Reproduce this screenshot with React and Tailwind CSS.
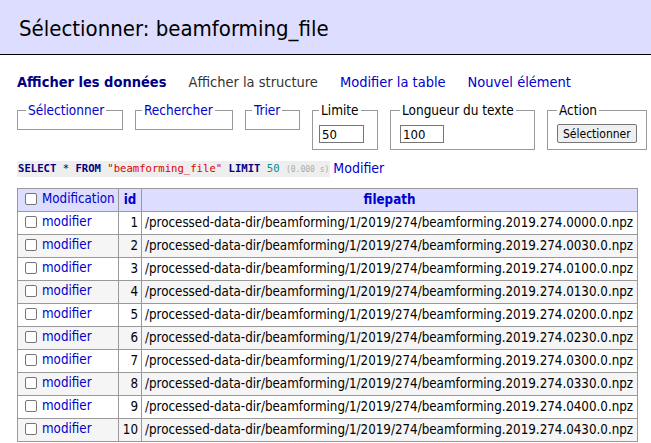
const rows = [
  "0000", "0030", "0100", "0130", "0200", "0230", "0300", "0330", "0400", "0430",
];

const font = { fontFamily: '"DejaVu Sans Condensed", "DejaVu Sans", sans-serif' };

export default function App() {
  return (
    <div className="min-h-screen bg-white text-[13px] text-black" style={font}>
      {/* header band */}
      <div className="h-[55px] bg-[#ddf] border-b border-black flex items-center pl-[19px] pt-[3px]">
        <h1 className="text-[22px] font-normal">Sélectionner: beamforming_file</h1>
      </div>

      <div className="pl-[17px]">
        {/* nav */}
        <div className="flex gap-[22px] mt-[19px] h-[17px] items-center text-[14.5px]">
          <span className="font-bold text-[#000080]">Afficher les données</span>
          <a className="text-[#333]">Afficher la structure</a>
          <a className="text-[#0000cc]">Modifier la table</a>
          <a className="text-[#0000cc]">Nouvel élément</a>
        </div>

        {/* fieldsets */}
        <div className="flex items-start gap-[12px] mt-[9px] text-[13.5px]">
          <fieldset className="border border-[#999] w-[106px] h-[30px] px-[8px]">
            <legend className="px-[2px] text-[#0000cc]">Sélectionner</legend>
          </fieldset>
          <fieldset className="border border-[#999] w-[98px] h-[30px] px-[6px]">
            <legend className="px-[2px] text-[#0000cc]">Rechercher</legend>
          </fieldset>
          <fieldset className="border border-[#999] w-[55px] h-[30px] px-[6px]">
            <legend className="px-[2px] text-[#0000cc]">Trier</legend>
          </fieldset>
          <fieldset className="border border-[#999] w-[66px] h-[50px] px-[6px]">
            <legend className="px-[2px]">Limite</legend>
            <input
              defaultValue="50"
              className="w-[45px] h-[18px] border border-[#767676] px-[2px] text-[13px] mt-[5px]"
            />
          </fieldset>
          <fieldset className="border border-[#999] w-[145px] h-[50px] px-[9px]">
            <legend className="px-[2px]">Longueur du texte</legend>
            <input
              defaultValue="100"
              className="w-[44px] h-[18px] border border-[#767676] px-[2px] text-[13px] mt-[5px]"
            />
          </fieldset>
          <fieldset className="border border-[#999] w-[98px] h-[50px] px-[9px]">
            <legend className="px-[2px]">Action</legend>
            <button className="h-[19px] px-[5px] mt-[4px] bg-[#efefef] border border-[#767676] rounded-[2px] text-[12px] leading-none">
              Sélectionner
            </button>
          </fieldset>
        </div>

        {/* query */}
        <p className="mt-[10px] flex items-center gap-[3px] h-[17px]">
          <code
            className="bg-[#eee] text-[10.6px] px-[1px] leading-[15px]"
            style={{ fontFamily: '"DejaVu Sans Mono", monospace' }}
          >
            <b className="text-[#000080]">SELECT</b> * <b className="text-[#000080]">FROM</b>{" "}
            <span className="text-[#d00]">"beamforming_file"</span>{" "}
            <b className="text-[#000080]">LIMIT</b> <span className="text-[#009090]">50</span>{" "}
            <span className="text-[#aaa] text-[8px] font-normal">(0.000 s)</span>
          </code>
          <a className="text-[#0000cc] text-[14px]">Modifier</a>
        </p>

        {/* result table */}
        <table className="mt-[11px] border-collapse border border-[#999] w-[621px] text-[13.25px]">
          <thead>
            <tr className="bg-[#ddf] h-[22px]">
              <th className="border border-[#999] w-[101px] text-left font-normal pl-[7px] pr-[3px]">
                <span className="inline-flex items-center gap-[5px] text-[#0000cc]">
                  <span className="w-[12px] h-[12px] border border-[#767676] rounded-[2px] bg-white" />
                  Modification
                </span>
              </th>
              <th className="border border-[#999] w-[23px] text-[#0000cc] font-bold">id</th>
              <th className="border border-[#999] text-[#0000cc] font-bold">filepath</th>
            </tr>
          </thead>
          <tbody>
            {rows.map((t, i) => (
              <tr key={t} className={`h-[23px] ${i % 2 ? "bg-[#f5f5f5]" : "bg-white"}`}>
                <td className="border border-[#999] pl-[7px] pr-[3px]">
                  <span className="inline-flex items-center gap-[5px] text-[#0000cc]">
                    <span className="w-[12px] h-[12px] border border-[#767676] rounded-[2px] bg-white" />
                    modifier
                  </span>
                </td>
                <td className="border border-[#999] text-right px-[3px]">{i + 1}</td>
                <td className="border border-[#999] px-[3px] whitespace-nowrap">
                  /processed-data-dir/beamforming/1/2019/274/beamforming.2019.274.{t}.0.npz
                </td>
              </tr>
            ))}
          </tbody>
        </table>
      </div>
    </div>
  );
}
